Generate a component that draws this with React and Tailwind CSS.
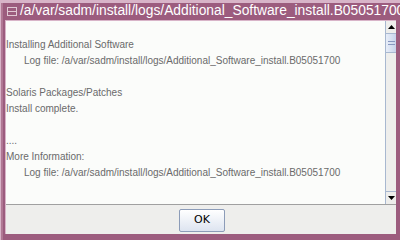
import React from 'react';

const lines = [
  { text: '', indent: false },
  { text: 'Installing Additional Software', indent: false },
  { text: 'Log file: /a/var/sadm/install/logs/Additional_Software_install.B05051700', indent: true },
  { text: '', indent: false },
  { text: 'Solaris Packages/Patches', indent: false },
  { text: 'Install complete.', indent: false },
  { text: '', indent: false },
  { text: '....', indent: false },
  { text: 'More Information:', indent: false },
  { text: 'Log file: /a/var/sadm/install/logs/Additional_Software_install.B05051700', indent: true },
];

function ScrollBar() {
  return (
    <div className="w-[11px] flex flex-col bg-[#eeeeec] border-l border-[#a8b8d0]">
      <div className="h-[13px] flex items-center justify-center bg-[#eeeeec] border-b border-[#a8b8d0]">
        <svg width="7" height="4" viewBox="0 0 7 4"><path d="M3.5 0 L7 4 L0 4 Z" fill="#000" /></svg>
      </div>
      <div className="h-[19px] flex flex-col items-center justify-center gap-[2px] bg-gradient-to-r from-[#e8eef8] to-[#c8d4ec] border-b border-[#a8b8d0]">
        <div className="w-[7px] h-px bg-[#8898c0]" />
        <div className="w-[7px] h-px bg-[#8898c0]" />
      </div>
      <div className="flex-1" />
      <div className="h-[13px] flex items-center justify-center border-t border-[#a8b8d0]">
        <svg width="7" height="4" viewBox="0 0 7 4"><path d="M0 0 L7 0 L3.5 4 Z" fill="#000" /></svg>
      </div>
    </div>
  );
}

export default function App() {
  return (
    <div className="w-[400px] h-[240px] bg-[#d8b4c8] pt-[3px] pl-px overflow-hidden flex flex-col">
      <div className="flex-1 flex flex-col bg-[#9c5c7e] border-l-[2px] border-[#b07894] min-w-0">
        <div className="h-[16px] flex items-center shrink-0">
          <div className="ml-[4px] w-[13px] h-[9px] border border-[#e0c8d4] flex items-center justify-center">
            <div className="w-[8px] h-px bg-[#e0c8d4]" />
          </div>
          <div className="w-px h-[16px] bg-[#d8b4c8] ml-[2px]" />
          <span className="ml-[1px] text-white text-[13.8px] leading-[16px] whitespace-nowrap" style={{ fontFamily: '"Liberation Sans", Arial, sans-serif' }}>
            /a/var/sadm/install/logs/Additional_Software_install.B05051700
          </span>
        </div>
        <div className="flex-1 flex flex-col mt-px ml-[2px] mr-[4px] mb-[6px] border-l border-t border-[#d8b4c8] min-h-0">
          <div className="flex flex-1 min-h-0 bg-[#fbfcfa]">
            <div className="flex-1 text-[#6a6a6a] text-[10px] leading-[16px]" style={{ fontFamily: '"Liberation Sans", Arial, sans-serif' }}>
              {lines.map((l, i) => (
                <div key={i} className={`h-[16px] whitespace-nowrap ${l.indent ? 'pl-[18px]' : ''}`}>{l.text}</div>
              ))}
            </div>
            <ScrollBar />
          </div>
          <div className="h-[30px] shrink-0 bg-[#eeeeec] border-t border-[#a0a0a0] flex items-center justify-center">
            <button className="w-[46px] h-[23px] mt-[2px] ml-[2px] rounded-[2px] border border-[#8c9cb8] bg-gradient-to-b from-[#ffffff] to-[#dde4f0] text-[11px] text-black" style={{ fontFamily: '"DejaVu Sans", sans-serif' }}>
              OK
            </button>
          </div>
        </div>
      </div>
    </div>
  );
}
